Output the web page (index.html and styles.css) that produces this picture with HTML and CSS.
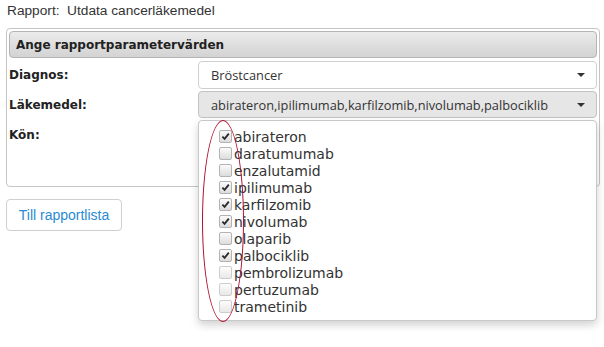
FILE: index.html
```html
<!DOCTYPE html>
<html lang="sv">
<head>
<meta charset="utf-8">
<title>Rapport</title>
<link rel="stylesheet" href="styles.css">
</head>
<body>
<div class="page">
  <div class="title">Rapport:&nbsp; Utdata cancerläkemedel</div>
  <div class="panel">
    <div class="panel-header">Ange rapportparametervärden</div>
    <div class="params">
      <div class="label">Diagnos:</div>
      <div class="field">
        <div class="select"><span class="select-text">Bröstcancer</span><span class="caret"></span></div>
      </div>
      <div class="label">Läkemedel:</div>
      <div class="field field-open">
        <div class="select select-active"><span class="select-text">abirateron,ipilimumab,karfilzomib,nivolumab,palbociklib</span><span class="caret"></span></div>
        <ul class="dropdown">
          <li><span class="cb checked"><svg viewBox="0 0 12 12"><path d="M2.6 6.2 L5 8.6 L9.6 2.8"/></svg></span>abirateron</li>
          <li><span class="cb"></span>daratumumab</li>
          <li><span class="cb"></span>enzalutamid</li>
          <li><span class="cb checked"><svg viewBox="0 0 12 12"><path d="M2.6 6.2 L5 8.6 L9.6 2.8"/></svg></span>ipilimumab</li>
          <li><span class="cb checked"><svg viewBox="0 0 12 12"><path d="M2.6 6.2 L5 8.6 L9.6 2.8"/></svg></span>karfilzomib</li>
          <li><span class="cb checked"><svg viewBox="0 0 12 12"><path d="M2.6 6.2 L5 8.6 L9.6 2.8"/></svg></span>nivolumab</li>
          <li><span class="cb"></span>olaparib</li>
          <li><span class="cb checked"><svg viewBox="0 0 12 12"><path d="M2.6 6.2 L5 8.6 L9.6 2.8"/></svg></span>palbociklib</li>
          <li><span class="cb faded"></span>pembrolizumab</li>
          <li><span class="cb faded"></span>pertuzumab</li>
          <li><span class="cb faded"></span>trametinib</li>
        </ul>
        <div class="annotation"></div>
      </div>
      <div class="label">Kön:</div>
      <div class="field">
        <div class="listbox"></div>
      </div>
    </div>
  </div>
  <button class="btn" type="button">Till rapportlista</button>
</div>
</body>
</html>
```
FILE: styles.css
```css
html, body {
  margin: 0;
  padding: 0;
  background: #fff;
}
.page {
  font-family: "Liberation Sans", Arial, sans-serif;
  color: #333;
  padding: 0 4px 0 6px;
  min-height: 347px;
}
.title {
  font-size: 13.7px;
  line-height: 20px;
  padding: 1px 0 0 1px;
  height: 28px;
  box-sizing: border-box;
}
.panel {
  border: 1px solid #c4c4c4;
  border-radius: 4px;
  padding: 2px;
  height: 159px;
  box-sizing: border-box;
}
.panel-header {
  height: 27px;
  box-sizing: border-box;
  border: 1px solid #b4b4b4;
  border-radius: 4px;
  background: linear-gradient(#ebebeb, #d3d3d3);
  font-family: "DejaVu Sans", Verdana, sans-serif;
  font-weight: bold;
  font-size: 12px;
  line-height: 26px;
  padding-left: 6px;
  color: #222;
}
.params {
  display: grid;
  grid-template-columns: 189px 1fr;
  grid-auto-rows: 30px;
  margin-top: 1px;
}
.label {
  font-family: "DejaVu Sans", Verdana, sans-serif;
  font-weight: bold;
  font-size: 12px;
  line-height: 28px;
  color: #222;
  padding-top: 2px;
}
.field {
  padding-top: 2px;
  position: relative;
}
.select {
  height: 28px;
  box-sizing: border-box;
  border: 1px solid #cfcfcf;
  border-radius: 4px;
  background: #fff;
  display: flex;
  align-items: center;
  padding: 0 11px 0 12px;
  font-family: "Open Sans", sans-serif;
  font-size: 12.8px;
  color: #333;
}
.select-active {
  background: #e6e6e6;
  border-color: #c2c2c2;
  height: 27px;
}
.select-text {
  flex: 1;
  white-space: nowrap;
  overflow: hidden;
}
.caret {
  width: 0;
  height: 0;
  border-top: 4px solid #333;
  border-left: 4px solid transparent;
  border-right: 4px solid transparent;
}
.listbox {
  height: 62px;
  border: 1px solid #cfcfcf;
  border-radius: 4px;
  box-sizing: border-box;
}
.dropdown {
  position: absolute;
  z-index: 5;
  left: 0;
  right: 0;
  top: 31px;
  margin: 0;
  list-style: none;
  background: #fff;
  border: 1px solid #c8c8c8;
  border-radius: 4px;
  box-shadow: 0 4px 8px rgba(0, 0, 0, 0.18);
  padding: 8px 0 4px 20px;
  font-family: "DejaVu Sans", Verdana, sans-serif;
  font-size: 14px;
  color: #333;
}
.dropdown li {
  height: 17px;
  line-height: 17px;
  display: flex;
  align-items: center;
}
.cb {
  width: 11px;
  height: 11px;
  border: 1px solid #b3b3b3;
  border-radius: 2px;
  background: linear-gradient(#fbfbfb, #dcdcdc);
  margin-right: 2px;
  margin-top: -2px;
  display: inline-flex;
}
.cb.faded {
  border-color: #cdcdcd;
  background: linear-gradient(#fdfdfd, #e8e8e8);
}
.cb svg {
  width: 11px;
  height: 11px;
}
.cb svg path {
  fill: none;
  stroke: #2b2b2b;
  stroke-width: 2;
}
.annotation {
  position: absolute;
  z-index: 6;
  left: 4px;
  top: 31px;
  width: 42px;
  height: 202px;
  box-sizing: border-box;
  border: 1px solid #b01030;
  border-radius: 50%;
}
.btn {
  margin-top: 12px;
  height: 32px;
  width: 116px;
  border: 1px solid #cfcfcf;
  border-radius: 4px;
  background: #fff;
  font-family: "Liberation Sans", Arial, sans-serif;
  font-size: 14px;
  color: #2a8bd2;
  padding: 0;
}
```
